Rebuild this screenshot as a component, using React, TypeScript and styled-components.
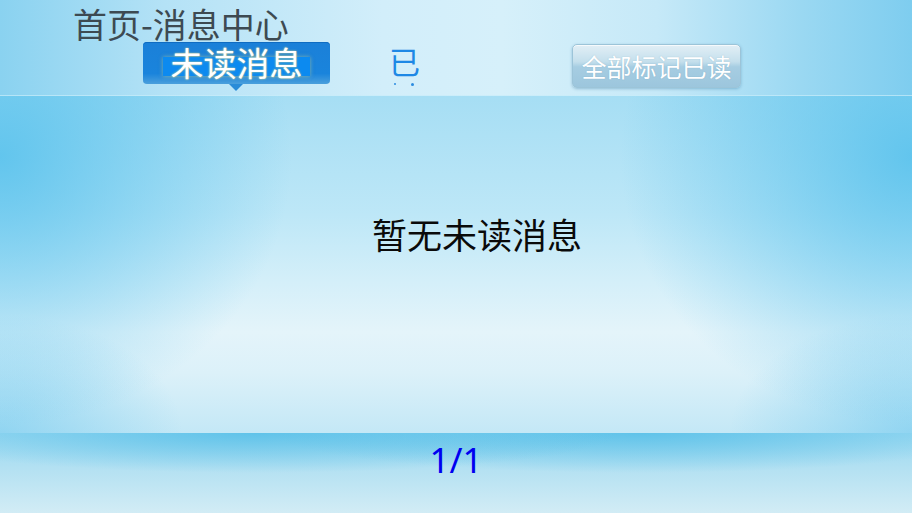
import React from 'react'
import styled, { createGlobalStyle } from 'styled-components'

const GlobalStyle = createGlobalStyle`
  html, body {
    margin: 0;
    padding: 0;
    width: 912px;
    height: 513px;
    overflow: hidden;
  }
  body {
    font-family: 'Noto Sans CJK SC', 'Noto Sans', sans-serif;
  }
`

const Screen = styled.div`
  width: 912px;
  height: 513px;
  display: flex;
  flex-direction: column;
`

const Header = styled.header`
  height: 95px;
  display: flex;
  flex-direction: column;
  border-bottom: 1px solid rgba(200, 236, 249, 0.7);
  background: linear-gradient(
    90deg,
    #8ad2f0 0%,
    #b4e2f6 18%,
    #d2eefa 42%,
    #d6f0fa 55%,
    #c6e9f8 72%,
    #9ad8f2 88%,
    #7ecdef 100%
  );
`

const Title = styled.h1`
  margin: 6px 0 0 73px;
  font-size: 34px;
  line-height: 36px;
  font-weight: 400;
  color: #3d4a52;
`

const TabRow = styled.div`
  display: flex;
  align-items: flex-start;
  padding: 0 0 0 143px;
`

const ActiveTab = styled.div`
  position: relative;
  width: 187px;
  height: 42px;
  box-sizing: border-box;
  border-radius: 4px;
  display: flex;
  align-items: center;
  justify-content: center;
  background: linear-gradient(#1b80d8 0%, #1a84dc 75%, #4a9fdc 100%);
  box-shadow: inset 0 1px 0 #0f6cc2;

  &::before {
    content: '';
    position: absolute;
    left: 20px;
    right: 20px;
    top: 15px;
    bottom: 8px;
    background: #0c8af0;
    box-shadow: 0 0 4px rgba(236, 226, 120, 0.5);
  }

  &::after {
    content: '';
    position: absolute;
    left: 86px;
    bottom: -7px;
    border-left: 7px solid transparent;
    border-right: 7px solid transparent;
    border-top: 7px solid #2a8cd8;
  }
`

const ActiveLabel = styled.span`
  position: relative;
  font-size: 33px;
  line-height: 34px;
  color: #ffffff;
  text-shadow: 0 0 2px rgba(250, 232, 120, 0.95);
  margin-top: -3px;
`

const Tab = styled.div`
  margin-left: 61px;
  display: flex;
  flex-direction: column;
  align-items: flex-start;
  width: 40px;
`

const TabLabel = styled.span`
  font-size: 31px;
  line-height: 36px;
  color: #1e88e5;
  margin: 1px 0 0 -2px;
`

const Dots = styled.div`
  display: flex;
  gap: 15px;
  margin: 4px 0 0 3px;
`

const Dot = styled.span<{ $size: number }>`
  width: ${(p) => p.$size}px;
  height: ${(p) => p.$size}px;
  border-radius: 50%;
  background: #2a8be0;
`

const MarkButton = styled.button`
  margin: 2px 0 0 141px;
  width: 169px;
  height: 44px;
  padding: 0;
  border: 1px solid #9cc4d8;
  border-radius: 5px;
  font-family: 'Noto Sans CJK SC', sans-serif;
  font-size: 25px;
  line-height: 30px;
  color: #ffffff;
  background: linear-gradient(#e2eff6 0%, #c4dfec 40%, #a6cde2 52%, #9cc6dd 100%);
  box-shadow: 0 1px 3px rgba(70, 130, 170, 0.45), inset 0 1px 0 rgba(255, 255, 255, 0.7);
  text-shadow: 0 0 1px rgba(90, 140, 170, 0.5);
`

const Body = styled.main`
  height: 337px;
  display: flex;
  justify-content: center;
  padding: 118px 0 0 42px;
  box-sizing: border-box;
  background:
    radial-gradient(ellipse 32% 80% at 0% 18%, rgba(84, 192, 236, 0.85) 0%, rgba(84, 192, 236, 0) 100%),
    radial-gradient(ellipse 32% 80% at 100% 18%, rgba(84, 192, 236, 0.85) 0%, rgba(84, 192, 236, 0) 100%),
    radial-gradient(ellipse 20% 35% at 0% 100%, rgba(110, 200, 238, 0.6) 0%, rgba(110, 200, 238, 0) 100%),
    radial-gradient(ellipse 20% 35% at 100% 100%, rgba(110, 200, 238, 0.6) 0%, rgba(110, 200, 238, 0) 100%),
    linear-gradient(#a6def4 0%, #bde7f7 35%, #d4eff9 55%, #e4f4fa 70%, #dcf1f9 82%, #c4e8f6 100%);
`

const EmptyText = styled.p`
  margin: 0;
  font-size: 35px;
  line-height: 40px;
  color: #0a0a0a;
  font-weight: 400;
`

const Footer = styled.footer`
  flex: 1;
  display: flex;
  justify-content: center;
  align-items: flex-start;
  background:
    radial-gradient(ellipse 40% 50% at 28% 0%, rgba(72, 186, 230, 0.7) 0%, rgba(72, 186, 230, 0) 100%),
    radial-gradient(ellipse 40% 50% at 70% 0%, rgba(72, 186, 230, 0.7) 0%, rgba(72, 186, 230, 0) 100%),
    linear-gradient(#98d8f1 0%, #b4e1f2 45%, #d2ecf5 100%);
`

const PageInfo = styled.span`
  margin-top: 5px;
  font-family: 'Noto Sans', sans-serif;
  font-size: 35px;
  line-height: 44px;
  color: #0000f0;
`

export default function App() {
  return (
    <>
      <GlobalStyle />
      <Screen>
        <Header>
          <Title>首页-消息中心</Title>
          <TabRow>
            <ActiveTab>
              <ActiveLabel>未读消息</ActiveLabel>
            </ActiveTab>
            <Tab>
              <TabLabel>已</TabLabel>
              <Dots>
                <Dot $size={2} />
                <Dot $size={3} />
              </Dots>
            </Tab>
            <MarkButton>全部标记已读</MarkButton>
          </TabRow>
        </Header>
        <Body>
          <EmptyText>暂无未读消息</EmptyText>
        </Body>
        <Footer>
          <PageInfo>1/1</PageInfo>
        </Footer>
      </Screen>
    </>
  )
}
